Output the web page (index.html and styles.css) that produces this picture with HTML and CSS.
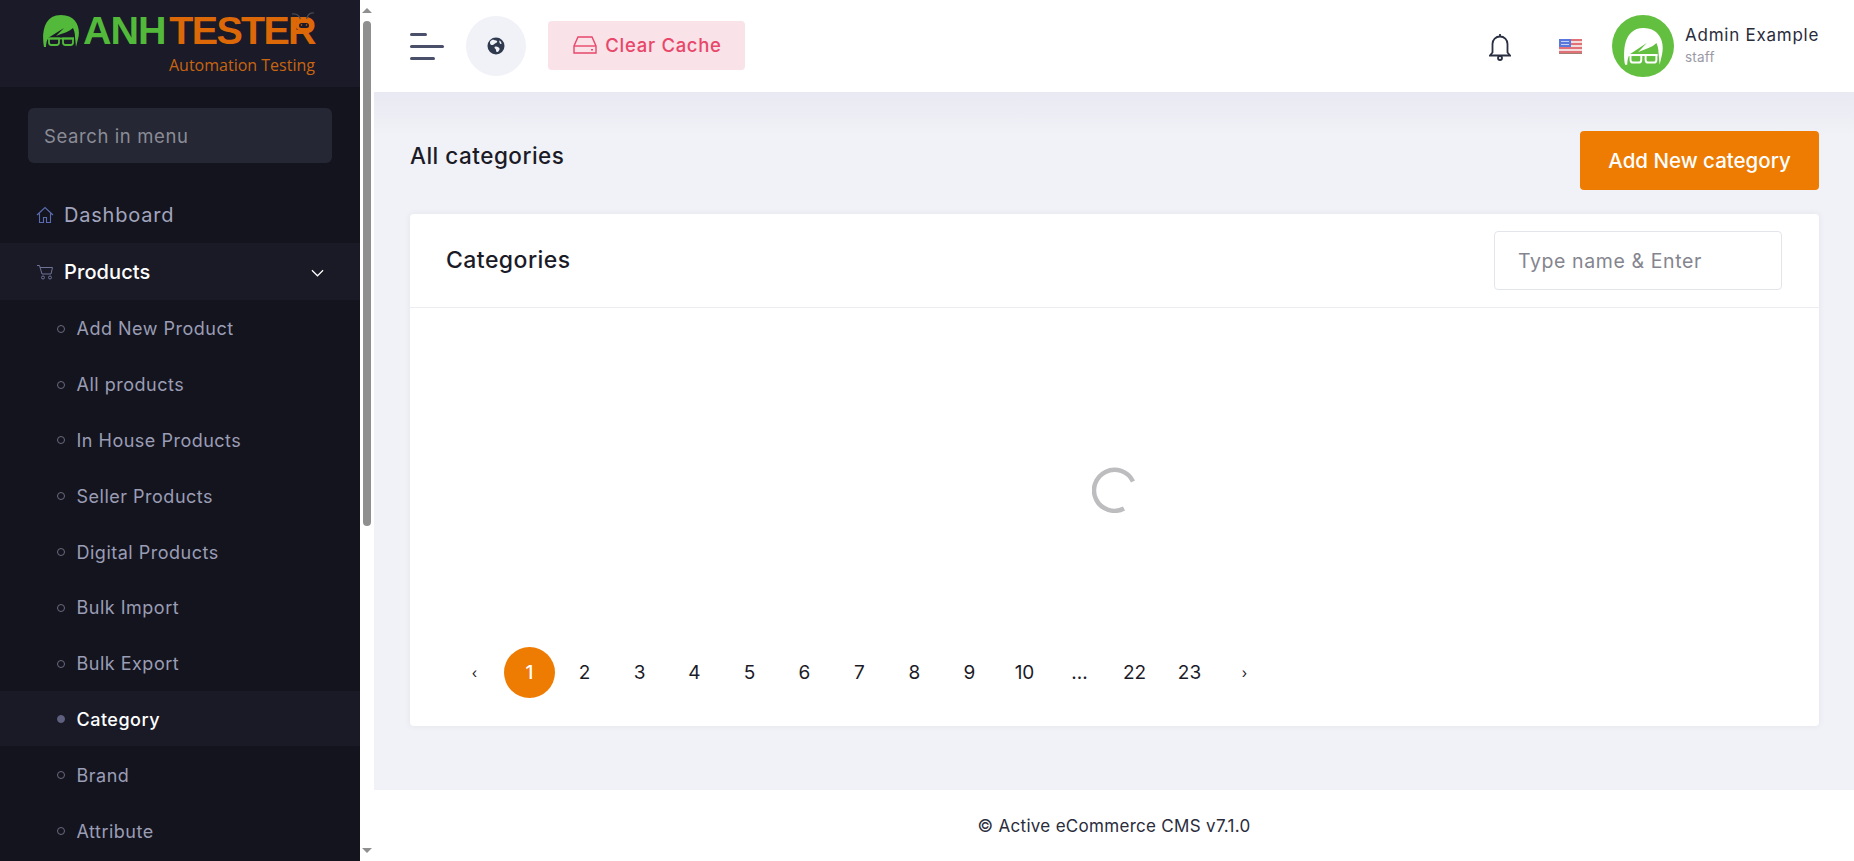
FILE: index.html
```html
<!DOCTYPE html>
<html lang="en">
<head>
<meta charset="utf-8">
<title>All categories</title>
<link rel="stylesheet" href="styles.css">
</head>
<body>
<div class="app">
  <aside class="sidebar">
    <div class="brand">
      <div class="logo">
        <svg class="logo-head" viewBox="0 0 36 32"><path fill="#52b93a" d="M1 32C-1 22-1 0 18 0c16 0 20 14 17 24l-2 8-1-10c0-4-1-7-2-9-4 4-10 5-17 8l8-8-16 10c-1 2-2 5-2 9z"/><g fill="none" stroke="#52b93a" stroke-width="1.800"><path d="M4 23.500h27"/><path d="M6 23.500h10v4c0 1.500-1 2.500-2.500 2.500h-5C7 30 6 29 6 27.500zM20 23.500h10v4c0 1.500-1 2.500-2.500 2.500h-5c-1.500 0-2.500-1-2.500-2.500z"/></g></svg>
        <div class="logo-words">
          <div class="logo-name"><span class="logo-anh">ANH</span><span class="logo-tester">TESTER</span>
            <svg class="logo-bug" viewBox="0 0 24 22"><g fill="none" stroke="#4a4a50" stroke-width="1.200"><path d="M10 11C9 6 6 3 1 4"/><path d="M15 11c1-5 3-9 8-8"/></g><ellipse cx="13" cy="15" rx="9" ry="6.500" fill="#dd6808"/><rect x="8" y="13" width="10" height="5" rx="2.500" fill="#1a1a29"/><circle cx="10.500" cy="15" r=".8" fill="#dd6808"/><circle cx="15.500" cy="15" r=".8" fill="#dd6808"/></svg>
          </div>
          <div class="logo-sub">Automation Testing</div>
        </div>
      </div>
    </div>
    <div class="menu-search"><input class="menu-input" placeholder="Search in menu"></div>
    <nav class="nav">
      <a class="nav-top">
        <svg class="nav-ico" viewBox="0 0 18 18"><path fill="none" stroke="#5a6bb0" stroke-width="1.100" d="M1 9l8-7.500L17 9M3.500 7.500V16.500h4v-5h3v5h4V7.500"/></svg>
        <span>Dashboard</span>
      </a>
      <a class="nav-top nav-open">
        <svg class="nav-ico" viewBox="0 0 18 18"><g fill="none" stroke="#6f7398" stroke-width="1"><path d="M1 2.500h2.500L6 11h9l1.500-6.500H4"/><circle cx="7" cy="14.500" r="1.500"/><circle cx="14" cy="14.500" r="1.500"/></g></svg>
        <span class="nav-label">Products</span>
        <svg class="nav-chev" viewBox="0 0 14 8"><path fill="none" stroke="#fff" stroke-width="1.300" d="M1 1l6 6 6-6"/></svg>
      </a>
      <a class="nav-sub"><i class="dot"></i>Add New Product</a>
      <a class="nav-sub"><i class="dot"></i>All products</a>
      <a class="nav-sub"><i class="dot"></i>In House Products</a>
      <a class="nav-sub"><i class="dot"></i>Seller Products</a>
      <a class="nav-sub"><i class="dot"></i>Digital Products</a>
      <a class="nav-sub"><i class="dot"></i>Bulk Import</a>
      <a class="nav-sub"><i class="dot"></i>Bulk Export</a>
      <a class="nav-sub nav-active"><i class="dot"></i>Category</a>
      <a class="nav-sub"><i class="dot"></i>Brand</a>
      <a class="nav-sub"><i class="dot"></i>Attribute</a>
    </nav>
  </aside>
  <div class="scrollbar">
    <i class="arrow-up"></i>
    <div class="track"><div class="thumb"></div></div>
    <i class="arrow-down"></i>
  </div>
  <div class="main">
    <header class="topbar">
      <div class="burger"><i class="b1"></i><i class="b2"></i><i class="b3"></i></div>
      <div class="globe-btn">
        <svg class="globe" viewBox="0 0 18 18"><circle cx="9" cy="9" r="8.500" fill="#2f3a4f"/><path fill="#f1f2f7" d="M6 2.500c1 1 3 .5 4 1.500s-1 2-2 2.500-2 2-3.500 1.500S3 6 3 5s2-2 3-2.500zM9 9.500c2 0 3 1 3.500 2s-1 3-2 3.500-1.500-1-1.500-2-1.500-1.500-1.500-2.500.5-1 1.500-1zM12.500 3.500c1 .5 2 2 2 3s-1 .5-1.500 0-1-2.500-.5-3z"/></svg>
      </div>
      <button class="cache-btn">
        <svg class="hdd" viewBox="0 0 24 18"><g fill="none" stroke="#e8476a" stroke-width="1.400"><path d="M5 1h14l4 9v7H1v-7z"/><path d="M1 10h22"/></g><rect x="18" y="13" width="2" height="1.500" fill="#e8476a"/></svg>
        <span>Clear Cache</span>
      </button>
      <div class="top-right">
        <svg class="bell" viewBox="0 0 22 28"><g fill="none" stroke="#2a3042" stroke-width="1.800"><path d="M1 22.500h20l-2.500-3V11a7.500 7.500 0 0 0-15 0v8.500z"/><path d="M11 3.500V1"/><circle cx="11" cy="25" r="2"/></g></svg>
        <svg class="flag" viewBox="0 0 23 15"><rect width="23" height="15" fill="#f3dcdc"/><g fill="#e27078"><rect y="0" width="23" height="2"/><rect y="4" width="23" height="2"/><rect y="8" width="23" height="2"/><rect y="12" width="23" height="2"/></g><rect width="12" height="8" fill="#5a78dc"/><g fill="#c5d0f5"><rect x="2" y="2" width="8" height="1"/><rect x="2" y="5" width="8" height="1"/></g><rect y="14" width="23" height="1" fill="#a08070"/></svg>
        <div class="avatar">
          <svg viewBox="0 0 62 62"><g transform="translate(12 13) scale(1.080 1.150)"><path fill="#fff" d="M1 32C-1 22-1 0 18 0c16 0 20 14 17 24l-2 8-1-10c0-4-1-7-2-9-4 4-10 5-17 8l8-8-16 10c-1 2-2 5-2 9z"/><g fill="none" stroke="#fff" stroke-width="1.800"><path d="M4 23.500h27"/><path d="M6 23.500h10v4c0 1.500-1 2.500-2.500 2.500h-5C7 30 6 29 6 27.500zM20 23.500h10v4c0 1.500-1 2.500-2.500 2.500h-5c-1.500 0-2.500-1-2.500-2.500z"/></g></g></svg>
        </div>
        <div class="user">
          <div class="user-name">Admin Example</div>
          <div class="user-role">staff</div>
        </div>
      </div>
    </header>
    <main class="content">
      <div class="title-row">
        <h1 class="page-title">All categories</h1>
        <button class="add-btn">Add New category</button>
      </div>
      <section class="card">
        <div class="card-head">
          <h2 class="card-title">Categories</h2>
          <input class="card-search" placeholder="Type name &amp; Enter">
        </div>
        <div class="card-body">
          <div class="spinner-area">
            <svg class="spinner" viewBox="0 0 46 46"><path fill="none" stroke="#bdbdc0" stroke-width="4.500" d="M41 14.500A20.500 20.500 0 1 0 32 41.500"/></svg>
          </div>
          <div class="pager">
            <span class="pg pg-arrow">‹</span>
            <span class="pg pg-on">1</span>
            <span class="pg">2</span>
            <span class="pg">3</span>
            <span class="pg">4</span>
            <span class="pg">5</span>
            <span class="pg">6</span>
            <span class="pg">7</span>
            <span class="pg">8</span>
            <span class="pg">9</span>
            <span class="pg">10</span>
            <span class="pg">...</span>
            <span class="pg">22</span>
            <span class="pg">23</span>
            <span class="pg pg-arrow">›</span>
          </div>
        </div>
      </section>
    </main>
    <footer class="footer">© Active eCommerce CMS v7.1.0</footer>
  </div>
</div>
</body>
</html>
```
FILE: styles.css
```css
* { box-sizing: border-box; }
html, body { margin: 0; height: 100%; overflow: hidden; }
body { font-family: Inter, "Liberation Sans", sans-serif; color: #1b1b28; background: #fff; }
.app { display: flex; height: 861px; }

.sidebar { width: 360px; flex: none; background: #14141f; overflow: hidden; }
.brand { height: 87px; background: #1a1a29; display: flex; justify-content: center; padding: 14px 2px 0 0; }
.logo { display: flex; gap: 4px; }
.logo-head { width: 36px; height: 32px; margin-top: 1px; }
.logo-name { position: relative; display: flex; font: 700 39.500px/33px "Liberation Sans", sans-serif; letter-spacing: -1.100px; }
.logo-anh { color: #52b93a; margin-right: 4px; }
.logo-tester { color: #dd6808; letter-spacing: -1.700px; }
.logo-bug { position: absolute; right: 0; top: -4px; width: 24px; height: 22px; }
.logo-sub { font: 400 16px/20px "Open Sans", sans-serif; color: #c9650f; text-align: right; margin-top: 8px; }

.menu-search { padding: 21px 28px 0; }
.menu-input { width: 100%; height: 55px; border: 0; border-radius: 6px; background: #252734; padding: 0 16px; font: 400 18.500px Inter, sans-serif; letter-spacing: .6px; color: #fff; outline: 0; }
.menu-input::placeholder { color: #8b8c96; opacity: 1; }

.nav { padding-top: 23px; display: flex; flex-direction: column; }
.nav-top { height: 57px; display: flex; align-items: center; padding-left: 36px; font-size: 20px; letter-spacing: .8px; color: #a2a5bd; }
.nav-ico { width: 18px; height: 18px; margin-right: 10px; flex: none; }
.nav-open { background: #1a1a27; color: #fff; font-weight: 500; letter-spacing: .1px; }
.nav-label { flex: 1; }
.nav-chev { width: 13px; height: 8px; margin-right: 36px; margin-top: 3px; }
.nav-sub { height: 55.800px; padding-top: 2px; display: flex; align-items: center; padding-left: 57px; font-size: 18px; letter-spacing: .5px; color: #9a9db4; }
.dot { width: 8px; height: 8px; border: 1px solid #6a6a7e; border-radius: 50%; margin-right: 11.500px; flex: none; }
.nav-active { background: #1a1a27; color: #fff; font-weight: 500; }
.nav-active .dot { background: #5f5f80; border-color: #5f5f80; }

.scrollbar { width: 14px; flex: none; background: #fff; display: flex; flex-direction: column; align-items: center; padding: 8px 0; }
.track { flex: 1; width: 8px; padding-top: 8px; }
.thumb { height: 505px; background: #8f8f8f; border-radius: 4px; }
.arrow-up { width: 0; height: 0; border: 5px solid transparent; border-top: 0; border-bottom: 5px solid #8f8f8f; }
.arrow-down { width: 0; height: 0; border: 5px solid transparent; border-bottom: 0; border-top: 5px solid #8f8f8f; }

.main { flex: 1; display: flex; flex-direction: column; min-width: 0; }
.topbar { height: 92px; flex: none; background: #fff; display: flex; align-items: center; padding-left: 36px; padding-right: 36px; }
.burger { width: 34px; height: 27px; margin-right: 22px; display: flex; flex-direction: column; justify-content: space-between; }
.burger i { display: block; height: 3px; background: #4a4f6a; border-radius: 2px; }
.b1 { width: 17px; }
.b2 { width: 34px; }
.b3 { width: 25px; }
.globe-btn { width: 60px; height: 60px; border-radius: 50%; background: #f1f2f7; display: flex; align-items: center; justify-content: center; margin-right: 22px; }
.globe { width: 18px; height: 18px; }
.cache-btn { width: 197px; height: 49px; margin-top: -2px; border: 0; border-radius: 4px; background: #f9e2e8; color: #e8476a; display: flex; align-items: center; justify-content: center; gap: 8px; font: 500 18.500px Inter, sans-serif; letter-spacing: .7px; padding: 0 0 0 2px; }
.hdd { width: 24px; height: 18px; }
.top-right { margin-left: auto; display: flex; align-items: center; }
.bell { width: 22px; height: 28px; margin-right: 48px; margin-top: 1px; }
.flag { width: 23px; height: 15px; margin-right: 30px; }
.avatar { width: 62px; height: 62px; border-radius: 50%; background: #62bf3f; margin-right: 11px; }
.avatar svg { display: block; width: 62px; height: 62px; }
.user { width: 133px; }
.user-name { font-size: 17px; line-height: 22px; letter-spacing: .75px; color: #2a2c3c; white-space: nowrap; }
.user-role { font-size: 13.500px; line-height: 22px; letter-spacing: .2px; color: #9a9aa5; }

.content { flex: 1; background: #f1f2f7 linear-gradient(#e8e9f2, #f1f2f7 44px); padding: 39px 35px 64px 36px; display: flex; flex-direction: column; min-height: 0; }
.title-row { display: flex; justify-content: space-between; align-items: flex-start; height: 83px; }
.page-title { margin: 10px 0 0; font-size: 22.500px; font-weight: 500; line-height: 30px; letter-spacing: .5px; color: #1b1b28; }
.add-btn { width: 239px; height: 59px; border: 0; border-radius: 4px; background: #ee7c02; color: #fff; font: 500 20.500px Inter, sans-serif; padding: 0; }

.card { flex: 1; background: #fff; border-radius: 4px; box-shadow: 0 0 6px rgba(80, 80, 120, .08); display: flex; flex-direction: column; }
.card-head { height: 94px; flex: none; border-bottom: 1px solid #ebedf2; display: flex; align-items: center; justify-content: space-between; padding: 0 37px 0 36px; }
.card-title { margin: 0 0 1px; font-size: 23px; font-weight: 500; letter-spacing: .45px; color: #1b1b28; }
.card-search { width: 288px; height: 59px; border: 1px solid #e2e5ec; border-radius: 4px; padding: 0 23px; font: 400 19.500px Inter, sans-serif; letter-spacing: .6px; outline: 0; }
.card-search::placeholder { color: #85858f; opacity: 1; }
.card-body { flex: 1; display: flex; flex-direction: column; padding: 0 39px 28px; }
.spinner-area { flex: 1; display: flex; align-items: center; justify-content: center; padding-top: 24px; }
.spinner { width: 46px; height: 46px; }
.pager { display: flex; align-items: center; gap: 4px; }
.pg { width: 51px; height: 51px; border-radius: 50%; display: flex; align-items: center; justify-content: center; font-size: 19px; color: #1b1b28; }
.pg-arrow { font-size: 14px; }
.pg-on { background: #ee7c02; color: #fff; font-weight: 500; }

.footer { height: 71px; flex: none; background: #fff; display: flex; align-items: center; justify-content: center; font-size: 17px; letter-spacing: .3px; color: #2a2c3c; }
```
